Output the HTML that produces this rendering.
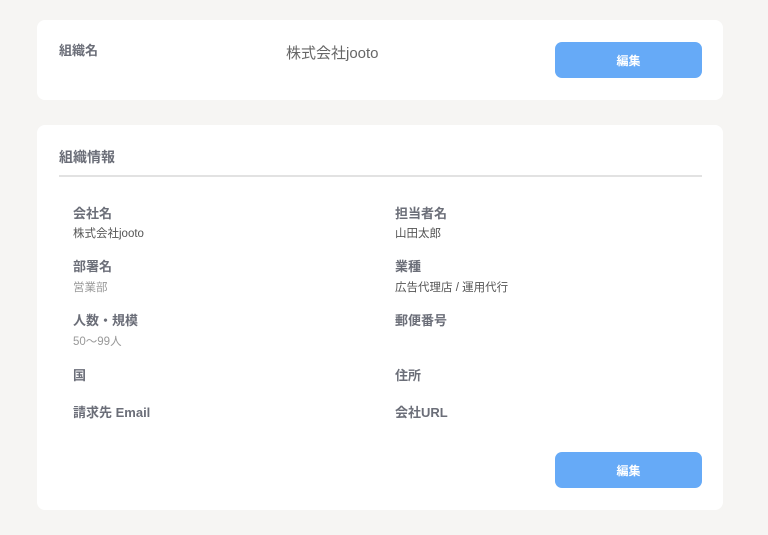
<!DOCTYPE html>
<html><head><meta charset="utf-8"><style>
*{margin:0;padding:0;box-sizing:border-box}
body{width:768px;height:535px;background:#f6f5f3;font-family:"Liberation Sans","Noto Sans CJK JP",sans-serif;position:relative;overflow:hidden;color:#6b6e78}
.card{position:absolute;left:37px;width:686px;background:#fff;border-radius:8px}
.a{position:absolute;white-space:nowrap;line-height:1}
.l{font-size:13px;font-weight:bold;color:#6b6e78}
.v{font-size:11.5px;color:#555}
.g{color:#999}
.btn{position:absolute;left:555px;width:147px;height:36px;background:#66aaf7;border-radius:7px;color:#fff;font-size:12px;font-weight:bold;display:flex;align-items:center;justify-content:center}
</style></head><body>
<div class="card" style="top:20px;height:80px"></div>
<div class="a l" style="left:59px;top:44px">組織名</div>
<div class="a" style="left:286px;top:46px;font-size:15px;color:#666">株式会社jooto</div>
<div class="btn" style="top:42px">編集</div>

<div class="card" style="top:125px;height:385px"></div>
<div class="a" style="left:59px;top:150px;font-size:14px;font-weight:bold;color:#6b6e78">組織情報</div>
<div style="position:absolute;left:59px;top:175px;width:643px;height:2px;background:#e2e2e2"></div>

<div class="a l" style="left:73px;top:207px">会社名</div>
<div class="a v" style="left:73px;top:229px">株式会社jooto</div>
<div class="a l" style="left:73px;top:260px">部署名</div>
<div class="a v g" style="left:73px;top:283px">営業部</div>
<div class="a l" style="left:73px;top:314px">人数・規模</div>
<div class="a v g" style="left:73px;top:337px">50〜99人</div>
<div class="a l" style="left:73px;top:369px">国</div>
<div class="a l" style="left:73px;top:406px">請求先 Email</div>

<div class="a l" style="left:395px;top:207px">担当者名</div>
<div class="a v" style="left:395px;top:229px">山田太郎</div>
<div class="a l" style="left:395px;top:260px">業種</div>
<div class="a v" style="left:395px;top:283px">広告代理店 / 運用代行</div>
<div class="a l" style="left:395px;top:314px">郵便番号</div>
<div class="a l" style="left:395px;top:369px">住所</div>
<div class="a l" style="left:395px;top:406px">会社URL</div>

<div class="btn" style="top:452px">編集</div>
</body></html>
